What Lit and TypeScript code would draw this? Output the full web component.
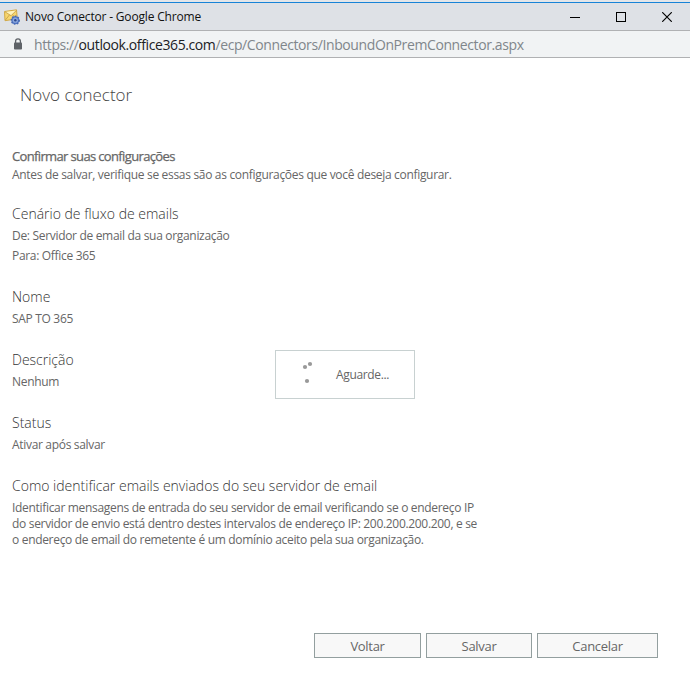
import { LitElement, html, css } from "lit";
import { customElement } from "lit/decorators.js";

interface Section { title: string; lines: string[]; tight?: boolean; }

const SECTIONS: Section[] = [
  { title: "Cenário de fluxo de emails", lines: ["De: Servidor de email da sua organização", "Para: Office 365"] },
  { title: "Nome", lines: ["SAP TO 365"] },
  { title: "Descrição", lines: ["Nenhum"] },
  { title: "Status", lines: ["Ativar após salvar"] },
  { title: "Como identificar emails enviados do seu servidor de email", tight: true, lines: [
    "Identificar mensagens de entrada do seu servidor de email verificando se o endereço IP",
    "do servidor de envio está dentro destes intervalos de endereço IP: 200.200.200.200, e se",
    "o endereço de email do remetente é um domínio aceito pela sua organização." ] },
];

@customElement("window-bars")
class WindowBars extends LitElement {
  static styles = css`
    :host { display: block; }
    svg { display: block; flex: none; }
    .top { height: 2px; background: #e4e6e9; border-bottom: 1px solid #1883d7; }
    .title { height: 27px; background: #dee1e6; border-bottom: 1px solid #b0b1b3; display: flex; align-items: center; padding-left: 4px; }
    .name { font-size: 12px; color: #111; margin-left: 5px; white-space: nowrap; flex: 1; letter-spacing: -0.18px; }
    .controls { display: flex; gap: 36px; padding-right: 18px; }
    .url { height: 26px; background: #f1f3f4; border-bottom: 1px solid #b0b1b3; display: flex; align-items: center; padding-left: 13px; color: #80868b; font-size: 14px; white-space: nowrap; }
    .addr { margin-left: 11px; letter-spacing: -0.395px; }
    .host { color: #202124; }
  `;
  render() {
    return html`
      <div class="top"></div>
      <div class="title">
        <svg width="16" height="16" viewBox="0 0 16 16">
          <path d="M.5 2.5 12.5.8l.8 8.9-12.3 2z" fill="#f8d66d" stroke="#d0a848"/>
          <path d="M1.2 2.9 7 6.6 12.2 1.4z" fill="#fff3bd"/>
          <path d="M1 2.8l6.1 3.9L12.6 1.2M1.4 11l4-5M13 9.6 8.6 6" fill="none" stroke="#c09a45" stroke-width=".8"/>
          <circle cx="11.3" cy="11.2" r="3.9" fill="#5579c6" stroke="#4468b4" stroke-width="1.5" stroke-dasharray="1.6 1.3"/>
          <circle cx="11.3" cy="11.2" r="2.6" fill="#8aa6de"/>
          <circle cx="11.3" cy="11.2" r="1.2" fill="#2d4a8c"/>
        </svg>
        <span class="name">Novo Conector - Google Chrome</span>
        <div class="controls">
          <svg width="10" height="10" viewBox="0 0 10 10" shape-rendering="crispEdges"><path d="M0 5h10v1H0z"/></svg>
          <svg width="10" height="10" viewBox="0 0 10 10" shape-rendering="crispEdges"><path d="M.5.5h9v9h-9z" fill="none" stroke="#000"/></svg>
          <svg width="10" height="10" viewBox="0 0 10 10"><path d="M.2.2l9.6 9.6M9.8.2.2 9.8" stroke="#000" stroke-width="1.15"/></svg>
        </div>
      </div>
      <div class="url">
        <svg width="10" height="12" viewBox="0 0 10 12"><path d="M2.6 5V3.2a2.4 2.4 0 0 1 4.8 0V5" fill="none" stroke="#5f6368" stroke-width="1.3"/><rect x="1" y="4.5" width="8" height="7" rx=".8" fill="#5f6368"/></svg>
        <span class="addr">https://<span class="host">outlook.office365.com</span>/ecp/Connectors/InboundOnPremConnector.aspx</span>
      </div>`;
  }
}

@customElement("app-root")
class AppRoot extends LitElement {
  static styles = css`
    :host { display: block; position: relative; width: 690px; height: 689px; background: #fff; overflow: hidden; font-family: "Open Sans", "Noto Sans", sans-serif; color: #666; }
    .page { padding: 0 12px; white-space: nowrap; }
    h1 { margin: 24px 0 0 8px; font-weight: 300; font-size: 17px; line-height: 26px; color: #444; }
    h2 { margin: 39px 0 0; font-size: 13px; line-height: 18px; font-weight: 400; letter-spacing: -0.64px; color: #666; -webkit-text-stroke: 0.25px #666; }
    h3 { margin: 0; font-weight: 300; font-size: 14px; line-height: 24px; color: #333; }
    .line { font-size: 12px; line-height: 20px; letter-spacing: -0.315px; }
    .intro { line-height: 18px; margin-top: 1px; }
    .section { margin-top: 19px; }
    .section.first { margin-top: 18px; }
    .tight h3 { margin-bottom: 2px; }
    .tight .line { line-height: 16px; }
    .wait { position: absolute; left: 275px; top: 350px; width: 138px; height: 47px; border: 1px solid #c8d1d1; background: #fff; display: flex; align-items: center; font-size: 12px; }
    .wait svg { margin-left: 25px; }
    .wait span { margin-left: 15px; letter-spacing: -0.35px; }
    .buttons { display: flex; justify-content: flex-end; gap: 5px; padding-right: 32px; margin-top: 85px; }
    button { box-sizing: border-box; width: 107px; height: 25px; padding: 2px 0 0; border: 1px solid #939f9f; background: #f8f8f8; font: 13px/21px "Open Sans", "Noto Sans", sans-serif; color: #666; letter-spacing: -0.3px; }
    .save { width: 106px; }
    .cancel { width: 121px; }
  `;
  render() {
    return html`
      <window-bars></window-bars>
      <div class="page">
        <h1>Novo conector</h1>
        <h2>Confirmar suas configurações</h2>
        <div class="line intro">Antes de salvar, verifique se essas são as configurações que você deseja configurar.</div>
        ${SECTIONS.map((s, i) => html`
          <div class="section ${i ? "" : "first"} ${s.tight ? "tight" : ""}">
            <h3>${s.title}</h3>
            ${s.lines.map(l => html`<div class="line">${l}</div>`)}
          </div>`)}
      </div>
      <div class="buttons"><button>Voltar</button><button class="save">Salvar</button><button class="cancel">Cancelar</button></div>
      <div class="wait">
        <svg width="20" height="31" viewBox="301 359 20 31" fill="#999"><circle cx="305" cy="367" r="2.1"/><circle cx="310" cy="364" r="2.1"/><circle cx="307" cy="381" r="2.1"/></svg>
        <span>Aguarde...</span>
      </div>`;
  }
}
